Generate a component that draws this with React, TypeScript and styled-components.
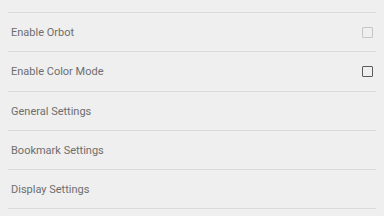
import React, { useLayoutEffect, useRef } from "react";
import styled, { createGlobalStyle } from "styled-components";

const GlobalStyle = createGlobalStyle`
    html, body {
        margin: 0;
        padding: 0;
        background: #efefef;
    }
    * {
        box-sizing: border-box;
    }
`;

type Pref = {
    title: string;
    checkbox?: "on" | "disabled";
};

const prefs: Pref[] = [
    { title: "Enable JavaScript" },
    { title: "Enable Orbot", checkbox: "disabled" },
    { title: "Enable Color Mode", checkbox: "on" },
    { title: "General Settings" },
    { title: "Bookmark Settings" },
    { title: "Display Settings" },
    { title: "Privacy Settings" },
    { title: "Advanced Settings" },
];

const App = () => {
    const listRef = useRef<HTMLDivElement>(null);

    // the screen is captured part way down the list
    useLayoutEffect(() => {
        if (listRef.current) listRef.current.scrollTop = 26;
    }, []);

    return (
        <>
            <GlobalStyle />
            <SettingsList ref={listRef}>
                {prefs.map((p) => (
                    <PrefRow key={p.title}>
                        <PrefTitle>{p.title}</PrefTitle>
                        {p.checkbox && <CheckBox disabled={p.checkbox === "disabled"} />}
                    </PrefRow>
                ))}
            </SettingsList>
        </>
    );
};

export default App;

const SettingsList = styled.div`
    width: 384px;
    height: 216px;
    overflow: hidden;
    background: #efefef;
    padding: 0 8px;
`;

const PrefRow = styled.div`
    display: flex;
    align-items: center;
    justify-content: space-between;
    height: 39.2px;
    padding: 0 3px;
    border-bottom: 1px solid #dadada;
`;

const PrefTitle = styled.span`
    font-family: Roboto, "Liberation Sans", sans-serif;
    font-size: 11px;
    color: #6e6e6e;
    padding-top: 1px;
`;

const CheckBox = styled.span<{ disabled?: boolean }>`
    width: 11px;
    height: 11px;
    border: 1.5px solid ${(p) => (p.disabled ? "#c6c6c6" : "#5c5c5c")};
    border-radius: 1px;
`;
